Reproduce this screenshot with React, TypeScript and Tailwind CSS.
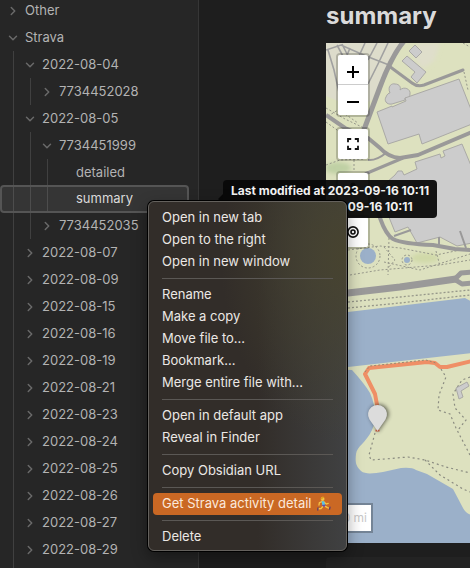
import React from "react";
import { ChevronDown, ChevronRight } from "lucide-react";

type Node = { name: string; open?: boolean; leaf?: boolean; selected?: boolean; children?: Node[] };

const folder = (name: string): Node => ({ name });

const tree: Node[] = [
  folder("Other"),
  {
    name: "Strava",
    open: true,
    children: [
      { name: "2022-08-04", open: true, children: [folder("7734452028")] },
      {
        name: "2022-08-05",
        open: true,
        children: [
          {
            name: "7734451999",
            open: true,
            children: [
              { name: "detailed", leaf: true },
              { name: "summary", leaf: true, selected: true },
            ],
          },
          folder("7734452035"),
        ],
      },
      folder("2022-08-07"),
      folder("2022-08-09"),
      folder("2022-08-15"),
      folder("2022-08-16"),
      folder("2022-08-19"),
      folder("2022-08-21"),
      folder("2022-08-23"),
      folder("2022-08-24"),
      folder("2022-08-25"),
      folder("2022-08-26"),
      folder("2022-08-27"),
      folder("2022-08-29"),
    ],
  },
];

function TreeItem({ node }: { node: Node }) {
  if (node.selected) {
    return (
      <li>
        <button className="-mt-px -mb-px -ml-[51px] flex h-7 w-[189px] items-center rounded border-2 border-[#555] bg-white/7 pl-[74px] text-[#dadada]">
          {node.name}
        </button>
      </li>
    );
  }
  const Chevron = node.open ? ChevronDown : ChevronRight;
  return (
    <li>
      <button className="flex h-[27px] w-full items-center pl-[6px] text-left">
        <span className="flex w-[19px] shrink-0">
          {!node.leaf && <Chevron size={14} strokeWidth={2.5} className="text-[#6a6a6a]" />}
        </span>
        {node.name}
      </button>
      {node.children && (
        <ul className={`ml-[13px] border-l border-[#404040] pl-[3px] ${node.name === "Strava" ? "pb-8" : ""}`}>
          {node.children.map((child) => (
            <TreeItem key={child.name} node={child} />
          ))}
        </ul>
      )}
    </li>
  );
}

function Runner() {
  return (
    <svg viewBox="0 0 16 16" className="size-4" role="img" aria-label="runner">
      <circle cx="6.600" cy="3" r="1.900" fill="#f6c445" />
      <path d="M4.800 2.600a2 2 0 0 1 3.600-1.200L6.600 2.400l-.8 1.400z" fill="#e0a020" />
      <path d="M6 5.600L3.400 6.600 3 9M8 6l2.200 2 2-.6" fill="none" stroke="#f6c445" strokeWidth="1.300" strokeLinecap="round" />
      <path d="M5.600 5.200h2.600l1 3.800-2.800.6z" fill="#58c3e8" />
      <path d="M6.200 9l3-.4 1 1.800-2 .6-2.200-.2z" fill="#6a4fa3" />
      <path d="M9.400 10.400l2 1.200 1.800.6M6.600 10.800l-1.600 1.800-2.400.2" fill="none" stroke="#f6c445" strokeWidth="1.400" strokeLinecap="round" />
      <path d="M14 11.200l-.4 2M2 12l-.2 2" stroke="#5b3b6f" strokeWidth="1.300" strokeLinecap="round" />
    </svg>
  );
}

const menu: string[][] = [
  ["Open in new tab", "Open to the right", "Open in new window"],
  ["Rename", "Make a copy", "Move file to...", "Bookmark...", "Merge entire file with..."],
  ["Open in default app", "Reveal in Finder"],
  ["Copy Obsidian URL"],
  ["Get Strava activity detail"],
  ["Delete"],
];

function ContextMenu() {
  return (
    <div
      role="menu"
      className="absolute top-[201px] left-[148px] w-[199px] rounded-md border border-[#64615d] bg-[#322d29] bg-[radial-gradient(ellipse_at_100%_15%,#47432f_0%,transparent_45%),linear-gradient(to_right,#322d29_55%,#404142)] px-1 pt-[5px] pb-[2px] text-[13px] text-[#ebe8e5] shadow-[0_0_0_1px_#000,0_6px_16px_rgba(0,0,0,0.4)]"
    >
      {menu.map((group, i) => (
        <React.Fragment key={group[0]}>
          {i > 0 && <hr className="mx-[9px] my-[5px] border-[#5b5855]" />}
          {group.map((label) =>
            label.startsWith("Get") ? (
              <button key={label} role="menuitem" className="flex h-[22px] w-full items-center gap-1 rounded bg-[#ca6824] px-[9px] whitespace-nowrap text-[#fbe9dc]">
                {label}
                <Runner />
              </button>
            ) : (
              <button key={label} role="menuitem" className="flex h-[22px] w-full items-center px-[9px] whitespace-nowrap">
                {label}
              </button>
            ),
          )}
        </React.Fragment>
      ))}
    </div>
  );
}

function MapDrawing() {
  return (
    <svg viewBox="326 43 144 500" preserveAspectRatio="xMinYMin slice" className="block h-full w-full" aria-hidden="true">
      <defs>
        <filter id="soft" x="-50%" y="-50%" width="200%" height="200%">
          <feGaussianBlur stdDeviation="2" />
        </filter>
      </defs>
      <rect x="326" y="43" width="144" height="500" fill="#dde1bf" />
      <path d="M326 43H402L388 66 372 100 355 108 326 96z" fill="#dddccb" />
      <path d="M418 43h22l-6 18-12 8-8-12z" fill="#dfdecb" filter="url(#soft)" />
      <ellipse cx="338" cy="168" rx="13" ry="6" fill="#bfd0a4" filter="url(#soft)" />
      <ellipse cx="425" cy="258" rx="14" ry="5" fill="#d0d9a8" filter="url(#soft)" />

      {/* car park aisles */}
      <g fill="none" stroke="#a0a0a0" strokeWidth="1.600">
        <path d="M326 50L341 45 366 56 389 65M328 50L334 70 340 97M337 45L345 60M342 44L350 60M350 48L345 60M365 43L359 56M377 43L368 60M388 43L378 64 368 84" />
      </g>

      {/* buildings */}
      <g fill="#cccccc" stroke="#aaa9a6" strokeWidth="1">
        <path d="M415 45L422 52 416 58 409 51z" />
        <path d="M407 56L426 72 417 83 411 77 415 72 402 61z" />
        <path d="M390 93C387 86 392 83 395 84 400 84 401 88 400 90 404 86 411 89 410 94 410 98 407 99 405 98L405 100 392 104C386 105 384 100 386 97 387 94 389 93 390 93z" />
        <path d="M377 112L392 106 392 107 406 101 405 98 459 79 472 112 472 124 422 144 419 134 388 144z" />
        <path d="M395 175L398 171 402 171 404 175 417 169 415 162 440 154 441 158 445 156 443 151 462 144 472 168 472 243 457 246 440 237 417 243 408 227 395 232 378 190z" />
      </g>

      {/* footpaths */}
      <g fill="none" stroke="#96978a" strokeWidth="1" strokeDasharray="2 2">
        <path d="M326 108L345 119 364 128M326 122L344 135M342 112L358 123M328 116L338 110 356 113M326 165L340 160 365 159M354 160V172M463 43L470 47M464 72L468 90M389 238L388 275M348 250L380 246 400 248 436 255 470 248M384 262L420 270 470 254M350 275L380 270 440 265 470 260M384 247L395 260 388 268M436 251L440 266" />
        <path d="M348 302L400 297 470 290M348 308L400 303 470 295" strokeWidth="1.300" />
        <circle cx="368" cy="256" r="12" />
        <circle cx="407" cy="260" r="5" />
      </g>

      {/* roads */}
      <g fill="none" stroke="#9a9999" strokeLinejoin="round">
        <path d="M405 40C396 50 389 63 380 87L362 135" strokeWidth="5" />
        <path d="M389 66L412 83Q417 87 424 85L463 70" strokeWidth="3" strokeLinecap="round" />
        <path d="M326 115L345 128 368 138 380 148Q388 157 400 158L418 155 472 132" strokeWidth="4" />
        <path d="M365 174L403 158" strokeWidth="3" />
        <path d="M368 160Q376 161 386 153" strokeWidth="2" />
        <path d="M372 190L380 218Q386 235 393 239 403 244 433 245L455 249 472 250" strokeWidth="4" />
        <path d="M394 236L411 230M439 237V246M460 231L466 248" strokeWidth="2" />
        <path d="M326 296L348 293 400 287 456 279" strokeWidth="7" />
        <path d="M454 280L461 273 472 272M454 279L462 284 472 283" strokeWidth="5" />
      </g>
      <circle cx="368" cy="256" r="8" fill="#9bb0c9" />
      <circle cx="407" cy="260" r="3" fill="#9bb0c9" />

      {/* river and lake */}
      <path d="M326 315L348 312 465 298 472 302V353L348 367 326 369z" fill="#9bb0c9" />
      <path d="M326 369L352 370Q364 383 370 393 375 404 376 420L372 430C366 443 357 446 356 454 355 463 356 466 361 471 366 475 375 473 383 472L401 468Q412 467 416 470L427 474 453 489 463 508Q466 514 472 515V545H326z" fill="#9bb0c9" />

      <g fill="none" stroke="#8a8b80" strokeWidth="1.200" strokeDasharray="2 3">
        <path d="M375 433L369 455 371 460 385 459 408 457 425 460 446 467 470 473M425 460L440 475 463 489 470 492M441 369L446 377 439 395 438 410 450 414 456 428 470 455M470 377L462 380 453 394 455 408 466 420 458 430" />
      </g>
      <path d="M456 388L467 382 469 386 461 391 463 397 459 399z" fill="#cccccc" stroke="#aaa9a6" strokeWidth="1" />

      {/* recorded route */}
      <path d="M472 361L447 367H440L435 363 427 362 369 368 365 374 375 394 378 410" fill="none" stroke="#ef8f66" strokeWidth="4" strokeLinejoin="round" />
      <path d="M365 372L370 366 426 360 436 363" fill="none" stroke="#9a8a70" strokeWidth="1" strokeDasharray="2 2" />

      {/* start marker */}
      <path d="M378 432L370 417a9.500 9.500 0 1 1 18 0z" fill="#000" opacity="0.600" filter="url(#soft)" />
      <path d="M375.500 430.500h4" stroke="#b8553a" strokeWidth="2" />
      <path d="M377.500 431L369.500 419.500A9.500 9.500 0 1 1 385.500 419.500z" fill="#dcdcdc" />
    </svg>
  );
}

const control = "flex size-[30px] items-center justify-center bg-white text-black";
const group = "rounded border-2 border-black/20 bg-clip-padding";

function MapView() {
  return (
    <div className="relative h-[500px] w-full shrink-0 overflow-hidden">
      <MapDrawing />
      <div className="absolute top-[10px] left-[10px] flex flex-col gap-[10px]">
        <div className={group}>
          <button aria-label="Zoom in" className={control + " rounded-t-xs border-b border-[#ccc]"}>
            <svg viewBox="0 0 14 14" className="mt-1 size-[14px]"><path d="M7 1v12M1 7h12" stroke="#000" strokeWidth="2" /></svg>
          </button>
          <button aria-label="Zoom out" className={control + " rounded-b-xs"}>
            <svg viewBox="0 0 14 14" className="mt-1 size-[14px]"><path d="M1 7h12" stroke="#000" strokeWidth="2" /></svg>
          </button>
        </div>
        <div className={group}>
          <button aria-label="Full screen" className={control + " rounded-xs"}>
            <svg viewBox="0 0 12 12" className="size-3" fill="none" stroke="#111" strokeWidth="1.800">
              <path d="M1 4.200V1h3.200M7.800 1H11v3.200M11 7.800V11H7.800M4.200 11H1V7.800" />
            </svg>
          </button>
        </div>
        <div className={group}>
          <button aria-label="Layers" className={control + " rounded-xs"}>
            <svg viewBox="0 0 12 14" className="size-[14px]"><circle cx="6" cy="4" r="2.600" fill="#222" /><path d="M1 7h10v6H1z" fill="#222" /></svg>
          </button>
        </div>
        <div className={group}>
          <button aria-label="Locate" className={control + " rounded-xs"}>
            <svg viewBox="0 0 12 12" className="size-3" fill="none" stroke="#111" strokeWidth="1.600">
              <circle cx="6" cy="6" r="5.100" />
              <circle cx="6" cy="6" r="2" />
            </svg>
          </button>
        </div>
      </div>
      <div className="absolute bottom-[10px] left-[10px] flex h-[30px] w-[37px] items-center justify-end border-2 border-black/25 bg-white bg-clip-padding pr-1 text-[12px] text-[#c8c8c8]">
        0 mi
      </div>
    </div>
  );
}

export default function App() {
  return (
    <div className="relative flex h-screen overflow-hidden bg-[#1e1e1e] font-[Inter,'Liberation_Sans',sans-serif]">
      <nav className="w-[199px] shrink-0 border-r border-[#363636] bg-[#262626] text-[13px] text-[#b3b3b3]">
        <ul className="-mt-[3px]">
          {tree.map((node) => (
            <TreeItem key={node.name} node={node} />
          ))}
        </ul>
      </nav>
      <main className="flex min-w-0 flex-1 flex-col pl-[127px]">
        <h1 className="h-[43px] shrink-0 text-[24px] leading-8 font-bold text-[#dadada]">summary</h1>
        <MapView />
        <div className="mt-[14px] flex-1 rounded-tl bg-[#232323]" />
      </main>
      <div role="tooltip" className="absolute top-[180px] left-[223px] rounded bg-[#080808]/95 px-2 py-[3px] text-center text-[12px] leading-4 font-bold whitespace-nowrap text-[#f2f2f2]">
        <span className="absolute top-[14px] -left-[5px] border-y-5 border-r-5 border-y-transparent border-r-[#080808]" />
        Last modified at 2023-09-16 10:11
        <br />
        Created at 2023-09-16 10:11
      </div>
      <ContextMenu />
    </div>
  );
}
